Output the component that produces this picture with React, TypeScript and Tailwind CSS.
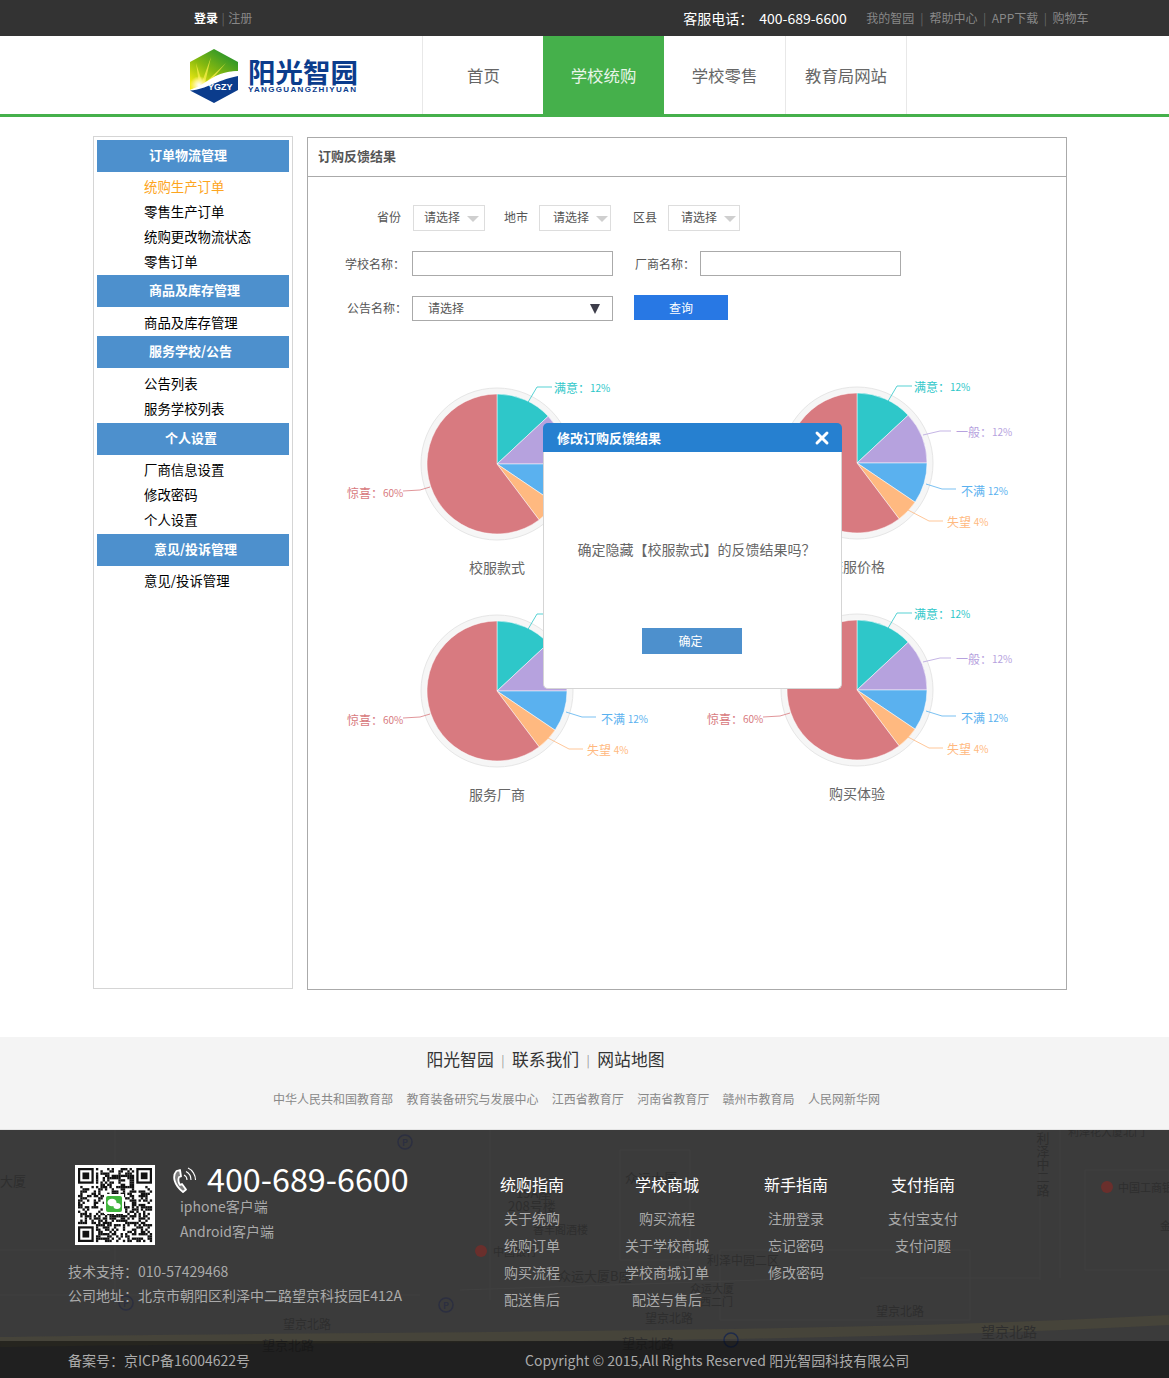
import React from 'react';
import { X } from 'lucide-react';

const FONT = '"Noto Sans CJK SC", "Noto Sans", sans-serif';

const sideMenu = [
  { title: '订单物流管理', titleClass: 'pl-[52px]', boxClass: 'mb-0', itemClass: 'leading-[23px]', items: ['统购生产订单', '零售生产订单', '统购更改物流状态', '零售订单'] },
  { title: '商品及库存管理', titleClass: 'pl-[52px]', boxClass: 'mb-px', itemClass: 'leading-[25px]', items: ['商品及库存管理'] },
  { title: '服务学校/公告', titleClass: 'pl-[52px]', boxClass: 'mb-[2px]', itemClass: 'leading-[25px]', items: ['公告列表', '服务学校列表'] },
  { title: '个人设置', titleClass: 'pl-[68px]', boxClass: 'mb-px', itemClass: 'leading-[23px]', items: ['厂商信息设置', '修改密码', '个人设置'] },
  { title: '意见/投诉管理', titleClass: 'pl-[57px]', boxClass: 'mb-0', itemClass: 'leading-[23px]', items: ['意见/投诉管理'] },
];

const wedges = [
  { from: 0, to: 47, color: '#2ec7c9' },
  { from: 47, to: 90, color: '#b6a2de' },
  { from: 90, to: 124, color: '#5ab1ef' },
  { from: 124, to: 143, color: '#ffb980' },
  { from: 143, to: 360, color: '#d87a80' },
];

const labels = [
  { name: '满意：', value: '12%', x: 237, y: 13, color: '#2ec7c9', line: '207,35 220,13 235,13' },
  { name: '一般：', value: '12%', x: 279, y: 58, color: '#b6a2de', line: '246,62 263,58 274,58' },
  { name: '不满 ', value: '12%', x: 284, y: 117, color: '#5ab1ef', line: '249,111 265,116 279,116' },
  { name: '失望 ', value: '4%', x: 270, y: 148, color: '#ffb980', line: '231,137 252,148 266,148' },
  { name: '惊喜：', value: '60%', x: 30, y: 118, color: '#d87a80', line: '86,117 103,116 113,113' },
];

function wedgePath(from: number, to: number) {
  const cx = 180;
  const cy = 90;
  const r = 70;
  const a = ((from - 90) * Math.PI) / 180;
  const b = ((to - 90) * Math.PI) / 180;
  const large = to - from > 180 ? 1 : 0;
  return `M${cx} ${cy}L${cx + r * Math.cos(a)} ${cy + r * Math.sin(a)}A${r} ${r} 0 ${large} 1 ${cx + r * Math.cos(b)} ${cy + r * Math.sin(b)}Z`;
}

function PieBlock({ title, className = '' }: { title: string; className?: string }) {
  return (
    <div className={`w-[360px] h-[227px] ${className}`}>
      <svg width="360" height="180" viewBox="0 0 360 180" className="block">
        <circle cx="180" cy="90" r="76" fill="#f6f6f6" stroke="#e6e6e6" />
        {wedges.map((w) => (
          <path key={w.from} d={wedgePath(w.from, w.to)} fill={w.color} stroke="#ffffff" strokeWidth="0.5" />
        ))}
        {labels.map((l) => (
          <g key={l.name}>
            <polyline points={l.line} fill="none" stroke={l.color} strokeOpacity="0.8" />
            <text x={l.x} y={l.y} fill={l.color} fontSize="12" dominantBaseline="central" xmlSpace="preserve">
              {l.name}
              <tspan fontSize="10">{l.value}</tspan>
            </text>
          </g>
        ))}
      </svg>
      <div className="h-[26px] leading-[26px] text-center text-sm text-[#666]">{title}</div>
    </div>
  );
}

function SmallSelect({ className = '' }: { className?: string }) {
  return (
    <div className={`w-[72px] h-[26px] border border-[#ddd] flex items-center pb-[2px] text-xs text-[#555] ${className}`}>
      请选择
      <svg width="12" height="6" viewBox="0 0 12 6" className="ml-[7px] mt-[4px]">
        <path d="M0 0H12L6 6Z" fill="#cfcfcf" />
      </svg>
    </div>
  );
}

function Logo() {
  return (
    <div className="flex items-center">
      <svg width="48" height="54" viewBox="0 0 48 54" className="block">
        <defs>
          <linearGradient id="logoTop" x1="0.8" y1="0" x2="0.1" y2="0.9">
            <stop offset="0" stopColor="#1c8f2e" />
            <stop offset="0.55" stopColor="#86b90f" />
            <stop offset="1" stopColor="#f6ec12" />
          </linearGradient>
          <radialGradient id="logoSun" cx="0.5" cy="0.5" r="0.5">
            <stop offset="0" stopColor="#ffffff" />
            <stop offset="0.5" stopColor="#fdf48a" />
            <stop offset="1" stopColor="#fdf48a" stopOpacity="0" />
          </radialGradient>
        </defs>
        <path d="M24 0L48 13V22C36 22 24 26 15 34L0 41V13Z" fill="url(#logoTop)" />
        <path d="M9 35L6 14L12 33L21 8L15 34L36 14L18 35L40 24L16 38Z" fill="#f9ef4a" opacity="0.75" />
        <circle cx="9" cy="36" r="9" fill="url(#logoSun)" />
        <path d="M0 41C16 36 20 25 48 22V28C32 30 24 36 14 41Z" fill="#ffffff" />
        <path d="M0 41.5C18 40 24 32 48 27V41L24 54Z" fill="#0b3c8c" />
        <text x="18" y="40.5" fill="#ffffff" fontSize="9" fontWeight="700" fontFamily='"Liberation Sans", sans-serif'>YGZY</text>
      </svg>
      <div className="ml-[10px] w-[110px] text-[#0b3c8c]">
        <div className="text-[27.5px] leading-[28px] font-bold whitespace-nowrap">阳光智园</div>
        <div className="text-[8px] leading-[10px] font-bold whitespace-nowrap font-['Liberation_Sans'] tracking-[1.35px]">YANGGUANGZHIYUAN</div>
      </div>
    </div>
  );
}

// qr modules are only a picture, seeded so every render is the same
function QrCode() {
  const n = 33;
  const cell = 74 / n;
  const cells: React.ReactNode[] = [];
  let seed = 20161;
  const inFinder = (x: number, y: number) =>
    (x < 8 && y < 8) || (x >= n - 8 && y < 8) || (x < 8 && y >= n - 8);
  for (let y = 0; y < n; y++) {
    for (let x = 0; x < n; x++) {
      seed = (seed * 1103515245 + 12345) & 0x7fffffff;
      if (!inFinder(x, y) && (seed >> 16) % 2 === 0) {
        cells.push(<rect key={`${x}-${y}`} x={3 + x * cell} y={3 + y * cell} width={cell + 0.1} height={cell + 0.1} fill="#111" />);
      }
    }
  }
  const finder = (x: number, y: number) => (
    <g key={`f${x}${y}`}>
      <rect x={3 + x * cell} y={3 + y * cell} width={cell * 7} height={cell * 7} fill="#111" />
      <rect x={3 + (x + 1) * cell} y={3 + (y + 1) * cell} width={cell * 5} height={cell * 5} fill="#fff" />
      <rect x={3 + (x + 2) * cell} y={3 + (y + 2) * cell} width={cell * 3} height={cell * 3} fill="#111" />
    </g>
  );
  return (
    <svg width="80" height="80" viewBox="0 0 80 80" className="block bg-white shrink-0">
      {cells}
      {finder(0, 0)}
      {finder(n - 7, 0)}
      {finder(0, n - 7)}
      <rect x="29" y="29" width="20" height="20" fill="#fff" />
      <rect x="31" y="31" width="16" height="16" rx="2" fill="#3fb53c" />
      <ellipse cx="37" cy="37.5" rx="4.5" ry="3.8" fill="#fff" />
      <ellipse cx="42" cy="41" rx="3.6" ry="3" fill="#fff" />
    </svg>
  );
}

function PhoneIcon() {
  return (
    <svg width="26" height="26" viewBox="0 0 26 26" className="block shrink-0" fill="none">
      <path d="M4.5 4C0 9 2 18 11 25L14 22.5L10 17L8 18C6 15 6 12.5 7 10L9 9.5L8 3Z" stroke="#ffffff" strokeWidth="1.8" strokeLinejoin="round" fill="#ffffff" fillOpacity="0.35" />
      <path d="M12 8C14 9 15 11 15 13" stroke="#ffffff" strokeWidth="1.1" />
      <path d="M14 4.5C17 6 19 9 19 13" stroke="#ffffff" strokeWidth="1.1" />
      <path d="M16 1C20.5 3 23.5 8 23.5 13" stroke="#ffffff" strokeWidth="1.1" />
    </svg>
  );
}

const mapTexts = [
  { t: '大厦', x: 0, y: 50, s: 13 },
  { t: '19A座', x: 516, y: 62, s: 13 },
  { t: '208号楼', x: 508, y: 75, s: 13 },
  { t: '香丰阁酒楼', x: 533, y: 99, s: 11 },
  { t: '中国银行', x: 493, y: 121, s: 11 },
  { t: '众运大厦B座', x: 558, y: 145, s: 13 },
  { t: '众运大厦', x: 625, y: 47, s: 13 },
  { t: '利泽中园二区', x: 707, y: 129, s: 12 },
  { t: '众运大厦', x: 690, y: 158, s: 11 },
  { t: '西二门', x: 700, y: 171, s: 11 },
  { t: '望京北路', x: 283, y: 193, s: 12 },
  { t: '望京北路', x: 262, y: 214, s: 13 },
  { t: '望京北路', x: 645, y: 187, s: 12 },
  { t: '望京北路', x: 622, y: 212, s: 13 },
  { t: '望京北路', x: 876, y: 180, s: 12 },
  { t: '望京北路', x: 981, y: 201, s: 14 },
  { t: '中国工商银行', x: 1118, y: 57, s: 11 },
  { t: '金', x: 1160, y: 95, s: 11 },
  { t: '利泽花大厦北门', x: 1068, y: 1, s: 11 },
];

const mapPins = [
  { x: 405, y: 12 },
  { x: 126, y: 173 },
  { x: 446, y: 175 },
];

function MapBackdrop() {
  return (
    <svg width="1169" height="248" viewBox="0 0 1169 248" className="absolute inset-0 block">
      <g fill="none" stroke="#414141">
        <path d="M0 165H420M460 160L820 148M860 148H1040" />
        <path d="M115 0V175M490 0V170M1040 0V150M1060 0V148" />
        <path d="M620 20H690V130H620ZM720 120H970V190H720Z" />
        <path d="M0 120H110M1085 40H1169V140H1085Z" />
      </g>
      <path d="M0 212C300 206 800 210 1169 190" fill="none" stroke="#46443a" strokeWidth="10" />
      {mapTexts.map((m) => (
        <text key={m.t + m.x} x={m.x} y={m.y} fontSize={m.s} fill="#2e2e2e" dominantBaseline="central">{m.t}</text>
      ))}
      {mapPins.map((p) => (
        <g key={p.x}>
          <circle cx={p.x} cy={p.y} r="7" fill="none" stroke="#2c2f40" strokeWidth="1.5" />
          <text x={p.x} y={p.y} fontSize="9" fontWeight="700" fill="#2c2f40" textAnchor="middle" dominantBaseline="central">P</text>
        </g>
      ))}
      <text x="1043" y="2" fontSize="13" fill="#2e2e2e" style={{ writingMode: 'vertical-rl' }}>利泽中二路</text>
      <circle cx="1107" cy="57" r="6" fill="#6a2f2c" />
      <circle cx="481" cy="121" r="6" fill="#6a2f2c" />
      <circle cx="731" cy="210" r="7" fill="none" stroke="#1e2a4a" strokeWidth="1.5" />
    </svg>
  );
}

const footerCols = [
  { title: '统购指南', className: 'ml-px', items: ['关于统购', '统购订单', '购买流程', '配送售后'] },
  { title: '学校商城', className: 'ml-[35px]', items: ['购买流程', '关于学校商城', '学校商城订单', '配送与售后'] },
  { title: '新手指南', className: 'ml-[29px]', items: ['注册登录', '忘记密码', '修改密码'] },
  { title: '支付指南', className: 'ml-[27px]', items: ['支付宝支付', '支付问题'] },
];

export default function App() {
  return (
    <div className="relative w-full bg-white" style={{ fontFamily: FONT }}>
      {/* top bar */}
      <div className="h-[36px] bg-[#333] flex items-center text-xs text-[#888]">
        <span className="ml-[194px] font-bold text-white">登录</span>
        <span className="mx-[3.5px] text-[#666]">|</span>
        <span>注册</span>
        <span className="ml-[431px] text-sm text-white whitespace-nowrap">客服电话：</span>
        <span className="ml-[6px] w-[88px] text-sm text-white whitespace-nowrap">400-689-6600</span>
        <span className="ml-[19px] whitespace-nowrap">我的智园</span>
        <span className="mx-[6px] text-[#666]">|</span>
        <span className="whitespace-nowrap">帮助中心</span>
        <span className="mx-[5.5px] text-[#666]">|</span>
        <span className="whitespace-nowrap">APP下载</span>
        <span className="mx-[5.5px] text-[#666]">|</span>
        <span className="whitespace-nowrap">购物车</span>
      </div>

      {/* nav */}
      <div className="h-[81px] border-b-[3px] border-[#45b04b] flex text-[16.4px]">
        <div className="w-[422px] pl-[190px] pt-[13px]">
          <Logo />
        </div>
        <div className="w-[121px] pl-px border-l border-[#e8e8e8] flex items-center justify-center text-[#666]">首页</div>
        <div className="w-[121px] bg-[#45b04b] flex items-center justify-center text-[#e8f5e8]">学校统购</div>
        <div className="w-[122px] border-r border-[#e8e8e8] flex items-center justify-center text-[#666]">学校零售</div>
        <div className="w-[121px] border-r border-[#e8e8e8] flex items-center justify-center text-[#666]">教育局网站</div>
      </div>

      {/* content */}
      <div className="flex pl-[93px] gap-[14px] pb-[47px]">
        <div className="mt-[19px] w-[200px] h-[853px] border border-[#d5d5d5] p-[3px]">
          {sideMenu.map((group) => (
            <div key={group.title} className={group.boxClass}>
              <div className={`h-[32px] leading-[30px] bg-[#4d90cd] text-[13px] font-bold text-white mb-[3px] ${group.titleClass}`}>
                {group.title}
              </div>
              {group.items.map((item) => (
                <div key={item} className={`h-[25px] pl-[47px] text-[13.4px] ${group.itemClass} ${item === '统购生产订单' ? 'text-[#fda51e]' : 'text-black'}`}>
                  {item}
                </div>
              ))}
            </div>
          ))}
        </div>

        <div className="mt-[20px] w-[760px] h-[853px] border border-[#aaa]">
          <div className="h-[39px] leading-[35px] border-b border-[#aaa] pl-[10px] text-[13px] font-bold text-[#555]">订购反馈结果</div>

          <div className="mt-[28px] h-[26px] flex items-center text-xs text-[#555]">
            <span className="ml-[69px] pb-[2px]">省份</span>
            <SmallSelect className="ml-[12px] pl-[10px]" />
            <span className="ml-[19px] pb-[2px]">地市</span>
            <SmallSelect className="ml-[11px] pl-[13px]" />
            <span className="ml-[22px] pb-[2px]">区县</span>
            <SmallSelect className="ml-[11px] pl-[12px]" />
          </div>

          <div className="mt-[20px] h-[25px] flex items-center text-xs text-[#555]">
            <span className="ml-[37px] w-[67px]">学校名称：</span>
            <div className="w-[201px] h-[25px] border border-[#aaa]" />
            <span className="ml-[22px] w-[65px]">厂商名称：</span>
            <div className="w-[201px] h-[25px] border border-[#aaa]" />
          </div>

          <div className="mt-[19px] h-[26px] flex items-start text-xs text-[#555]">
            <span className="ml-[39px] w-[65px] mt-px leading-[23px]">公告名称：</span>
            <div className="mt-px w-[201px] h-[25px] border border-[#aaa] flex items-center justify-between pl-[15px] pr-[12px] pb-[2px]">
              请选择
              <svg width="10" height="10" viewBox="0 0 10 10" className="block mt-[2px]"><path d="M0 0H10L5 10Z" fill="#3d3d4a" /></svg>
            </div>
            <div className="ml-[21px] w-[94px] h-[25px] leading-[25px] bg-[#2878e4] text-center text-white">查询</div>
          </div>

          <div className="mt-[53px] ml-[9px] grid grid-cols-[360px_360px]">
            <PieBlock title="校服款式" />
            <PieBlock title="校服价格" className="-mt-px" />
            <PieBlock title="服务厂商" />
            <PieBlock title="购买体验" className="-mt-px" />
          </div>
        </div>
      </div>

      {/* light footer */}
      <div className="h-[93px] bg-[#f4f4f4] border-b border-[#e4e4e4]">
        <div className="h-[46px] flex items-center justify-center text-[16.8px] text-[#333] pr-[78px]">
          <span>阳光智园</span>
          <span className="mx-[7.5px] text-xs text-[#999]">|</span>
          <span>联系我们</span>
          <span className="mx-[7.5px] text-xs text-[#999]">|</span>
          <span>网站地图</span>
        </div>
        <div className="mt-[8px] flex justify-center gap-[13.4px] text-xs text-[#888] pr-[16px]">
          <span>中华人民共和国教育部</span>
          <span>教育装备研究与发展中心</span>
          <span>江西省教育厅</span>
          <span>河南省教育厅</span>
          <span>赣州市教育局</span>
          <span>人民网新华网</span>
        </div>
      </div>

      {/* dark footer on map */}
      <div className="relative h-[248px] bg-[#3b3b3b] overflow-hidden">
        <MapBackdrop />
        <div className="relative h-[211px] flex">
          <div className="w-[481px] shrink-0">
            <div className="mt-[35px] ml-[75px] flex">
              <QrCode />
              <div className="ml-[17px]">
                <div className="flex items-center h-[29px]">
                  <PhoneIcon />
                  <span className="ml-[9px] -mt-[3px] text-[32.3px] leading-[30px] text-white whitespace-nowrap">400-689-6600</span>
                </div>
                <div className="ml-[8px] text-sm leading-[25px] text-[#aaa]">iphone客户端</div>
                <div className="ml-[8px] text-sm leading-[25px] text-[#aaa]">Android客户端</div>
              </div>
            </div>
            <div className="ml-[68px] mt-[14px] text-sm leading-[24px] text-[#aaa] whitespace-nowrap">
              <div>技术支持：010-57429468</div>
              <div>公司地址：北京市朝阳区利泽中二路望京科技园E412A</div>
            </div>
          </div>
          {footerCols.map((col) => (
            <div key={col.title} className={`w-[100px] pt-[42px] text-center ${col.className}`}>
              <div className="h-[24px] leading-[24px] text-base text-white mb-[9px]">{col.title}</div>
              {col.items.map((item) => (
                <div key={item} className="h-[27px] leading-[27px] text-sm text-[#aaa] whitespace-nowrap">{item}</div>
              ))}
            </div>
          ))}
        </div>
        <div className="relative h-[37px] pt-px bg-[#000]/45 flex items-center text-sm text-[#aaa]">
          <span className="ml-[68px] w-[457px]">备案号：京ICP备16004622号</span>
          <span className="whitespace-nowrap">Copyright © 2015,All Rights Reserved 阳光智园科技有限公司</span>
        </div>
      </div>

      {/* modal */}
      <div className="absolute left-[543px] top-[423px] w-[299px] h-[266px]">
        <div className="h-[29px] bg-[#2680d0] rounded-t-[5px] flex items-center justify-between pl-[14px] pr-[10px] text-[13px] font-bold text-white">
          修改订购反馈结果
          <X size={20} strokeWidth={3.5} color="#ffffff" />
        </div>
        <div className="h-[237px] bg-white border-x border-b border-[#d5d5d5] rounded-b-[5px]">
          <div className="pt-[83px] pl-[8px] text-center text-sm leading-[28px] text-[#666] whitespace-nowrap">确定隐藏【校服款式】的反馈结果吗？</div>
          <div className="mt-[65px] ml-[98px] w-[100px] h-[26px] leading-[26px] bg-[#4d90cd] pr-[3px] text-center text-xs text-white">确定</div>
        </div>
      </div>
    </div>
  );
}
